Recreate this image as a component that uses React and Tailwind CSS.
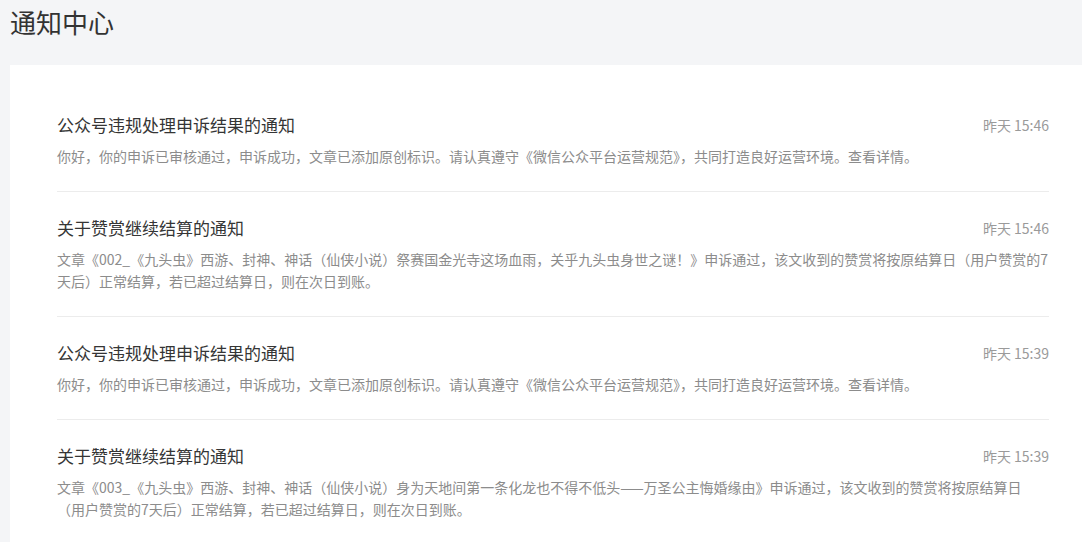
import React from "react";

const notices = [
  {
    title: "公众号违规处理申诉结果的通知",
    time: "昨天 15:46",
    body: "你好，你的申诉已审核通过，申诉成功，文章已添加原创标识。请认真遵守《微信公众平台运营规范》，共同打造良好运营环境。查看详情。",
  },
  {
    title: "关于赞赏继续结算的通知",
    time: "昨天 15:46",
    body: "文章《002_《九头虫》西游、封神、神话（仙侠小说）祭赛国金光寺这场血雨，关乎九头虫身世之谜！》申诉通过，该文收到的赞赏将按原结算日（用户赞赏的7天后）正常结算，若已超过结算日，则在次日到账。",
  },
  {
    title: "公众号违规处理申诉结果的通知",
    time: "昨天 15:39",
    body: "你好，你的申诉已审核通过，申诉成功，文章已添加原创标识。请认真遵守《微信公众平台运营规范》，共同打造良好运营环境。查看详情。",
  },
  {
    title: "关于赞赏继续结算的通知",
    time: "昨天 15:39",
    body: "文章《003_《九头虫》西游、封神、神话（仙侠小说）身为天地间第一条化龙也不得不低头——万圣公主悔婚缘由》申诉通过，该文收到的赞赏将按原结算日（用户赞赏的7天后）正常结算，若已超过结算日，则在次日到账。",
  },
];

function NoticeItem({ item, last }) {
  return (
    <div className={"py-6 " + (last ? "" : "border-b border-[#ececec]")}>
      <div className="flex items-center justify-between">
        <div className="text-[17px] leading-6 text-[#353535]">{item.title}</div>
        <div className="text-sm leading-6 text-[#9a9a9a]">{item.time}</div>
      </div>
      <p className="mt-2 text-sm leading-[22px] text-[#8c8c8c]">{item.body}</p>
    </div>
  );
}

export default function App() {
  return (
    <div
      className="min-h-[542px] bg-[#f4f5f7] pt-1"
      style={{ fontFamily: '"Noto Sans CJK SC", "Noto Sans", sans-serif' }}
    >
      <h1 className="pl-[10px] text-[26px] leading-9 font-normal text-[#333]">通知中心</h1>
      <div className="ml-[10px] mt-[25px] bg-white pl-[47px] pr-[33px] pt-6 pb-4">
        {notices.map((n, i) => (
          <NoticeItem key={i} item={n} last={i === notices.length - 1} />
        ))}
      </div>
    </div>
  );
}
